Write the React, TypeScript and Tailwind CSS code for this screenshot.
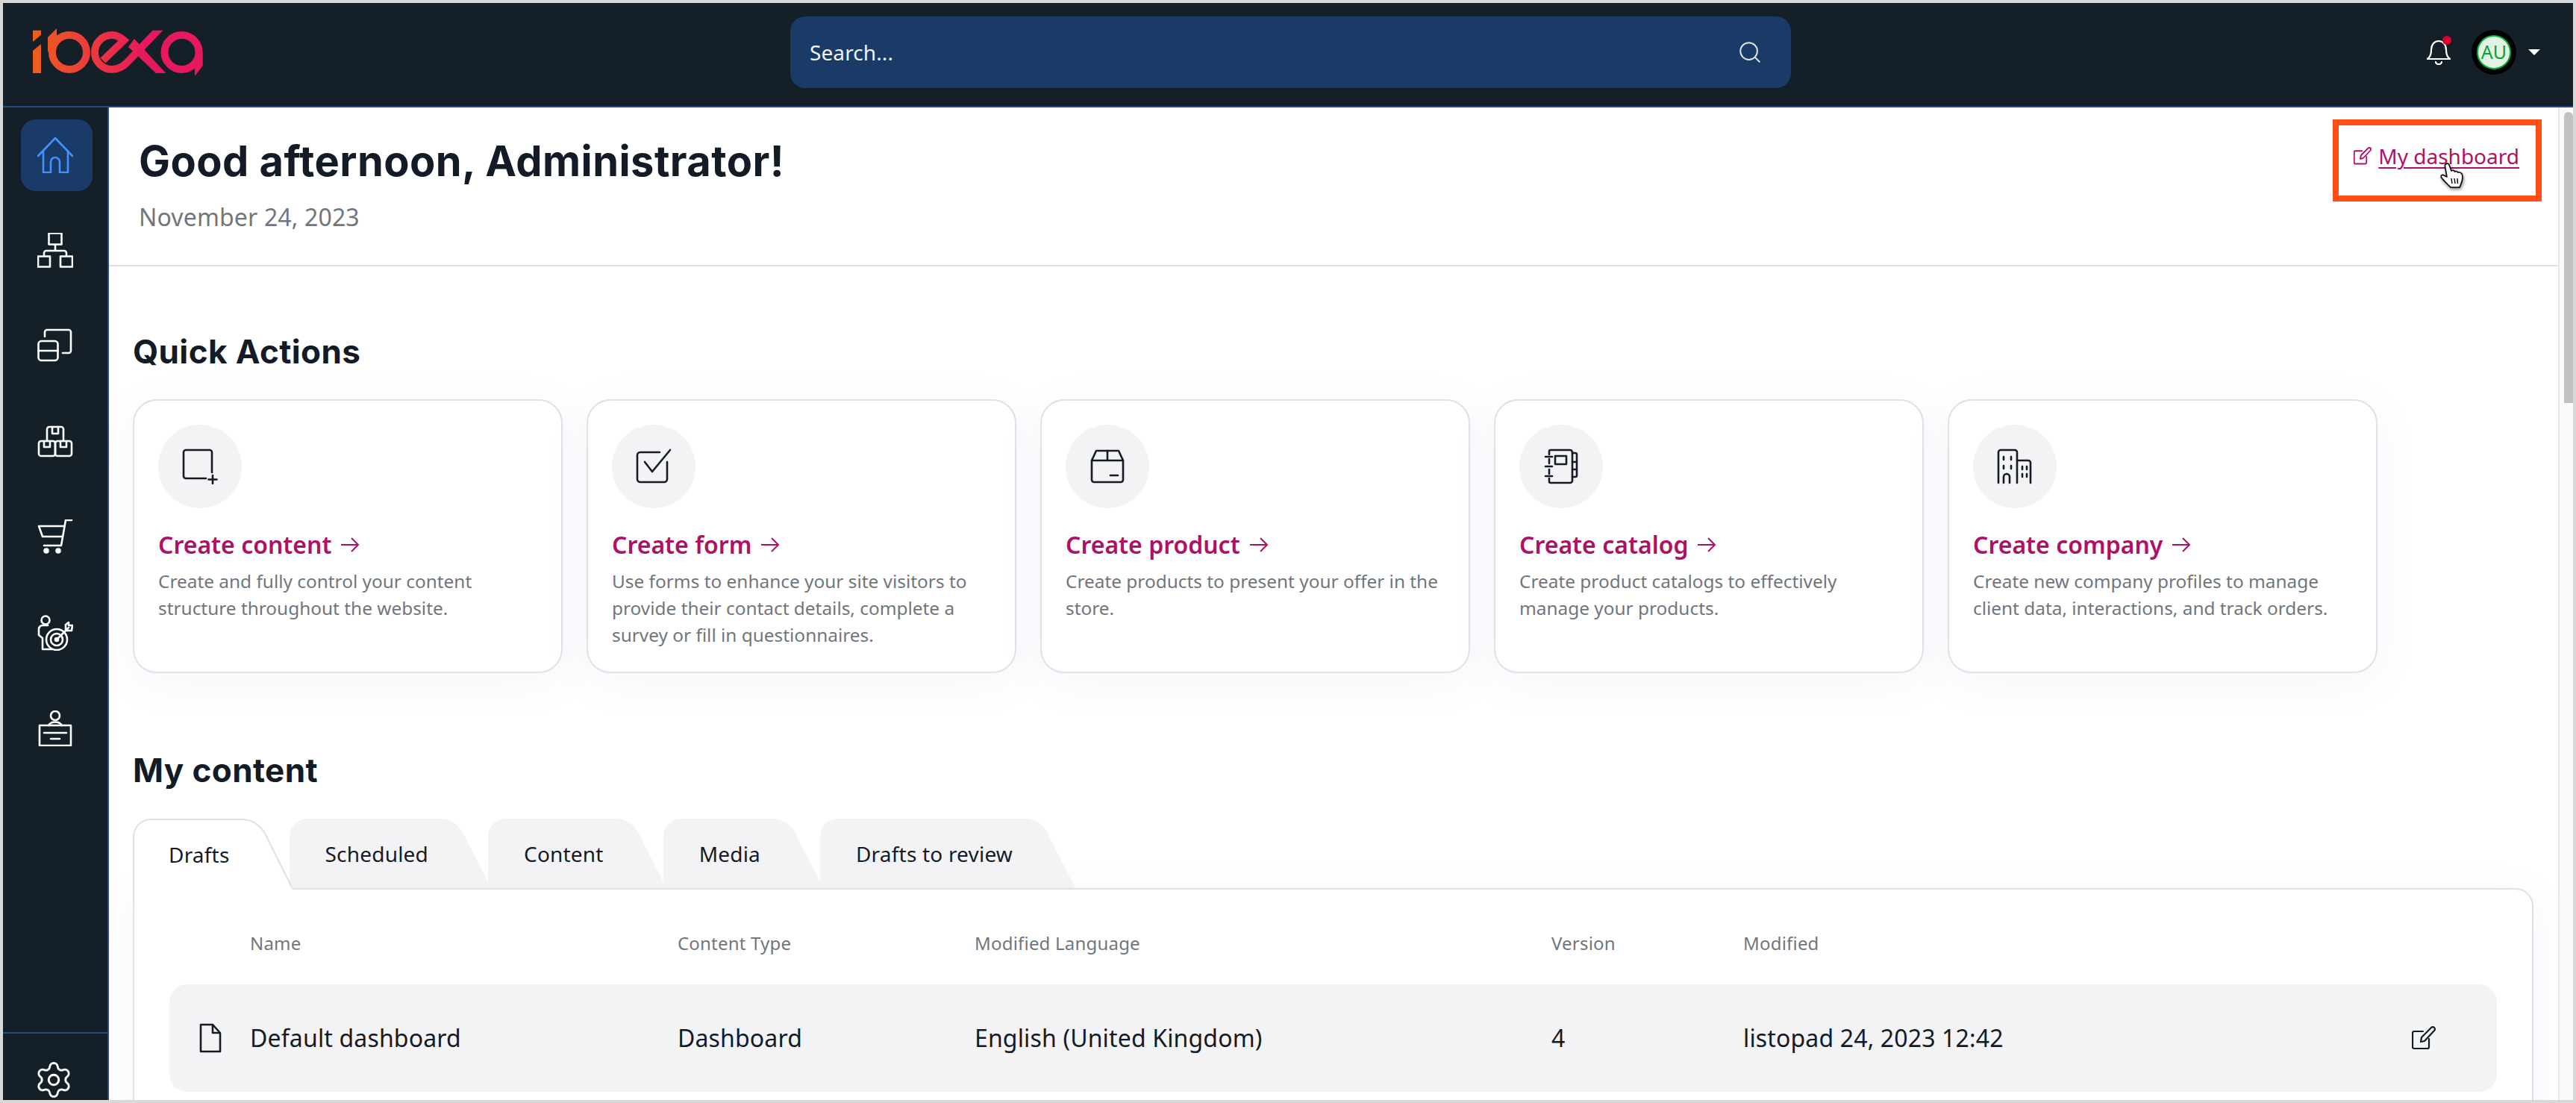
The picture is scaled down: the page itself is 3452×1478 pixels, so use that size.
import { Settings, Search } from "lucide-react"
import type { ReactNode } from "react"

function Logo() {
  return (
    <svg width="228" height="64" viewBox="0 0 228 64" fill="none">
      <defs>
        <linearGradient id="ibexa" gradientUnits="userSpaceOnUse" x1="0" y1="0" x2="150" y2="0">
          <stop offset="0" stopColor="#ee5f1c" />
          <stop offset="1" stopColor="#e8185c" />
        </linearGradient>
        <clipPath id="logoclip">
          <rect x="0" y="2.7" width="228" height="57.3" />
        </clipPath>
      </defs>
      <g fill="url(#ibexa)">
        <polygon points="0,2.7 11,2.7 11,8.7 0,18" />
        <polygon points="0,30 11,21 11,60 0,60" />
        <polygon points="20,32 20,12 32,0 32,14" />
        <polygon points="217.5,40 227.7,32 227.7,50 217,64 217,55" />
        <polygon points="128,25 136,14 178,60 165,60" />
      </g>
      <g stroke="url(#ibexa)" strokeWidth="10" clipPath="url(#logoclip)">
        <circle cx="49" cy="32" r="23" />
        <path d="M94 43 L122 16 C115 10 110 9 106 9 A23 23 0 0 0 106 55 C114 55 120 52 126 46 L172 -2" />
        <circle cx="199.5" cy="32" r="23" />
      </g>
    </svg>
  )
}

function NavButton({ active, children }: { active?: boolean; children: ReactNode }) {
  return (
    <div className={active ? "w-24 h-24 rounded-[20px] bg-[#1a3a68] pr-1 flex items-center justify-center" : "w-24 h-24 pr-1 flex items-center justify-center"}>
      {children}
    </div>
  )
}

function NavIcon({ children, color = "#fff" }: { children: ReactNode; color?: string }) {
  return (
    <svg width="48" height="48" viewBox="0 0 48 48" fill="none" stroke={color} strokeWidth="2.6" strokeLinejoin="round" strokeLinecap="round">
      {children}
    </svg>
  )
}

function EditIcon({ size, color, stroke = 2.2 }: { size: number; color: string; stroke?: number }) {
  return (
    <svg width={size} height={size} viewBox="0 0 32 32" fill="none" stroke={color} strokeWidth={stroke} strokeLinejoin="round" strokeLinecap="round">
      <path d="M15 7 H3 a2 2 0 0 0 -2 2 V28 a2 2 0 0 0 2 2 H21 a2 2 0 0 0 2 -2 V17" />
      <path d="M12 21 L13 15 L26 2 a2.4 2.4 0 0 1 4 4 L17 20 Z" />
    </svg>
  )
}

const actions = [
  {
    title: "Create content",
    text: ["Create and fully control your content", "structure throughout the website."],
    icon: (
      <>
        <path d="M40 32 V5 a3 3 0 0 0 -3 -3 H5 a3 3 0 0 0 -3 3 V37 a3 3 0 0 0 3 3 H32" />
        <path d="M41 36 V47 M35.5 41.5 H46.5" />
      </>
    ),
  },
  {
    title: "Create form",
    text: ["Use forms to enhance your site visitors to", "provide their contact details, complete a", "survey or fill in questionnaires."],
    icon: (
      <>
        <path d="M32 5 H6 a4 4 0 0 0 -4 4 V41 a4 4 0 0 0 4 4 H38 a4 4 0 0 0 4 -4 V18" />
        <path d="M12 18 L22 31 L46 2" />
      </>
    ),
  },
  {
    title: "Create product",
    text: ["Create products to present your offer in the", "store."],
    icon: (
      <>
        <path d="M3 16 L9 3 H39 L45 16 V42 a3 3 0 0 1 -3 3 H6 a3 3 0 0 1 -3 -3 Z" />
        <path d="M3 16 H45 M24 3 V16" />
        <path d="M28 36 H38" />
      </>
    ),
  },
  {
    title: "Create catalog",
    text: ["Create product catalogs to effectively", "manage your products."],
    icon: (
      <>
        <path d="M8 8 V4 a2 2 0 0 1 2 -2 H36 a3 3 0 0 1 3 3 V43 a3 3 0 0 1 -3 3 H10 a2 2 0 0 1 -2 -2 V40" />
        <path d="M8 14 V20 M8 28 V34" />
        <path d="M3 11 H12 M3 24 H12 M3 37 H12" />
        <rect x="16" y="10" width="15" height="11" />
        <path d="M39 6 H43 a2 2 0 0 1 2 2 V36 a2 2 0 0 1 -2 2 H39 M39 18 H45 M39 28 H45" />
      </>
    ),
  },
  {
    title: "Create company",
    text: ["Create new company profiles to manage", "client data, interactions, and track orders."],
    icon: (
      <>
        <path d="M2 46 V5 a3 3 0 0 1 3 -3 H24 a3 3 0 0 1 3 3 V46" />
        <path d="M27 16 H42 a3 3 0 0 1 3 3 V46" />
        <path d="M9 38 a4 4 0 0 1 8 0 V46 M9 38 V46" />
        <path d="M9 11 V15 M19 11 V15 M9 23 V27 M19 23 V27 M34 24 V28 M34 34 V38 M40 24 V28 M40 34 V38" />
      </>
    ),
  },
]

const tabs = ["Drafts", "Scheduled", "Content", "Media", "Drafts to review"]

// same columns for the header and the row
const gridCols = "grid grid-cols-[108px_573px_398px_773px_257px_1fr_114px] items-center"

export default function App() {
  return (
    <div className="relative h-[1478px] w-[3452px] overflow-hidden bg-[#d8d8d8] p-1 font-['Noto_Sans',sans-serif]">
      <div className="flex h-full flex-col bg-white">
        {/* Top bar */}
        <header className="relative flex h-[140px] shrink-0 items-center border-b-2 border-[#264a7c] bg-[#151f28]">
          <div className="ml-10 mt-[-6px]">
            <Logo />
          </div>
          <div className="ml-[787px] mt-[-6px] flex h-24 w-[1341px] items-center justify-between rounded-[20px] bg-[#1a3a68] pl-[26px] pr-[38px] text-[28px] tracking-[0.1px] text-[#f2f4f7]">
            <span>Search...</span>
            <Search size={34} strokeWidth={1.4} className="text-[#dfe3e8]" />
          </div>
          <div className="relative ml-[852px] mt-[-6px]">
            <svg width="32" height="34" viewBox="0 0 32 34" fill="none" stroke="#fff" strokeWidth="2.2" strokeLinecap="round" strokeLinejoin="round">
              <path d="M1 26 C5 23 6 19 6 14 C6 7 10 2 16 2 C22 2 26 7 26 14 C26 19 27 23 31 26 Z" />
              <path d="M12 30 a4 3 0 0 0 8 0" />
            </svg>
            <div className="absolute right-[-1px] top-[-5px] h-3 w-3 rounded-full bg-[#db0032]" />
          </div>
          <div className="ml-7 mt-[-6px] flex h-[60px] w-[60px] items-center justify-center rounded-full bg-black">
            <div className="flex h-[46px] w-[46px] items-center justify-center rounded-full border-2 border-[#0aae3a] bg-[#e2f3e6] text-[25px] text-[#0aa030]">
              AU
            </div>
          </div>
          <div className="ml-4 mt-[-6px] h-0 w-0 border-x-[8px] border-t-[8px] border-x-transparent border-t-white" />
        </header>

        <div className="flex min-h-0 flex-1">
          {/* Side menu */}
          <aside className="flex w-[142px] shrink-0 flex-col border-r-2 border-[#264a7c] bg-[#151f28]">
            <nav className="flex flex-1 flex-col gap-8 pl-6 pt-4">
              <NavButton active>
                <NavIcon color="#4191ff">
                  <path d="M1 25 L24 1 L47 25" />
                  <path d="M8 18 V47 H18 V33 a6 6 0 0 1 12 0 V47 H41 V18" />
                </NavIcon>
              </NavButton>
              <NavButton>
                <NavIcon>
                  <rect x="15.5" y="0.5" width="17" height="15" />
                  <rect x="1" y="31.5" width="16" height="14" />
                  <rect x="31" y="31.5" width="16" height="14" />
                  <path d="M24 16 V23 M9 31 V27 a3 3 0 0 1 3 -3 H36 a3 3 0 0 1 3 3 V31" />
                </NavIcon>
              </NavButton>
              <NavButton>
                <NavIcon>
                  <path d="M10 11 V5 a3 3 0 0 1 3 -3 H42 a3 3 0 0 1 3 3 V30 a3 3 0 0 1 -3 3 H34" />
                  <rect x="1.5" y="17" width="26" height="26" rx="4" />
                  <path d="M1.5 30 H27.5" />
                </NavIcon>
              </NavButton>
              <NavButton>
                <NavIcon>
                  <path d="M13 23 V7 a3 3 0 0 1 3 -3 H32 a3 3 0 0 1 3 3 V23" />
                  <path d="M20 4 V13 H28 V4" />
                  <rect x="2" y="23" width="22" height="20" rx="3" />
                  <rect x="24" y="23" width="22" height="20" rx="3" />
                  <path d="M9 23 V31 H17 V23 M31 23 V31 H39 V23" />
                </NavIcon>
              </NavButton>
              <NavButton>
                <NavIcon>
                  <path d="M46 1 H38 L32 35 H9" />
                  <path d="M2 9 H36 M2 9 L7 23 H34" />
                  <circle cx="12" cy="42" r="2.5" fill="#fff" />
                  <circle cx="28" cy="42" r="2.5" fill="#fff" />
                </NavIcon>
              </NavButton>
              <NavButton>
                <NavIcon>
                  <circle cx="11" cy="7" r="5.5" />
                  <path d="M14 14 H7 a5 5 0 0 0 -5 5 V27 L7 31 V46 H20" />
                  <circle cx="26" cy="33" r="14" />
                  <circle cx="26" cy="33" r="8" />
                  <circle cx="26" cy="33" r="2" />
                  <path d="M26 33 L42 17 M38 13 V21 H46 L47 14 H42 L42 10 Z" />
                </NavIcon>
              </NavButton>
              <NavButton>
                <NavIcon>
                  <circle cx="24" cy="7" r="6" />
                  <path d="M15 20 a10 8 0 0 1 18 0" />
                  <rect x="3" y="20" width="42" height="27" />
                  <path d="M9 30 H39 M18 38 H30" />
                </NavIcon>
              </NavButton>
            </nav>
            <div className="flex h-[91px] shrink-0 justify-center border-t-2 border-[#264a7c] pr-1 pt-[35px]">
              <Settings size={54} strokeWidth={1.3} className="text-white" />
            </div>
          </aside>

          {/* Main column */}
          <main className="min-w-0 flex-1 overflow-hidden">
            <div className="flex h-[213px] justify-between border-b-2 border-[#e0e0e8] pl-10 pr-[52px]">
              <div className="pt-[38px]">
                <h1 className="font-['Inter',sans-serif] text-[56px] leading-[68px] font-bold tracking-[0.45px] text-[#131c26]">
                  Good afternoon, Administrator!
                </h1>
                <p className="mt-[19px] text-[32px] leading-[44px] tracking-[0.15px] text-[#71767c]">November 24, 2023</p>
              </div>
              <a className="mt-[45px] flex h-10 items-center gap-[9px] text-[28px] text-[#ae1164] underline underline-offset-[4px] decoration-2">
                <EditIcon size={24} color="#ae1164" stroke={2.4} />
                My dashboard
              </a>
            </div>

            <section className="pl-8 pt-[84px]">
              <h2 className="h-[60px] font-['Inter',sans-serif] text-[44px] leading-[60px] font-bold tracking-[0.4px] text-[#131c26]">Quick Actions</h2>
              <div className="mt-[34px] flex gap-8">
                {actions.map((a) => (
                  <div
                    key={a.title}
                    className="h-[367px] w-[576px] rounded-[32px] border-2 border-[#e0e0e8] bg-white p-8 shadow-[0_12px_64px_rgba(71,88,154,0.06)]"
                  >
                    <div className="flex h-28 w-28 items-center justify-center rounded-full bg-[#f3f3f5]">
                      <svg width="48" height="48" viewBox="0 0 48 48" fill="none" stroke="#131c26" strokeWidth="2.6" strokeLinecap="round" strokeLinejoin="round">
                        {a.icon}
                      </svg>
                    </div>
                    <div className="mt-[25px] flex h-12 items-center gap-3 text-[32px] font-semibold text-[#ae1164]">
                      {a.title}
                      <svg width="26" height="24" viewBox="0 0 26 24" fill="none" stroke="#ae1164" strokeWidth="2">
                        <path d="M1 12 H24 M15 3 L24 12 L15 21" />
                      </svg>
                    </div>
                    <p className="mt-[7px] text-[24.4px] leading-9 text-[#71767c]">
                      {a.text.map((line) => (
                        <span key={line} className="block whitespace-nowrap">
                          {line}
                        </span>
                      ))}
                    </p>
                  </div>
                ))}
              </div>
            </section>

            <section className="pl-8 pr-[33px] pt-[100px]">
              <h2 className="h-[60px] font-['Inter',sans-serif] text-[44px] leading-[60px] font-bold tracking-[0.4px] text-[#131c26]">My content</h2>
              <div className="relative z-10 mt-[35px] mb-[-2px] flex h-[95px] items-stretch">
                {tabs.map((t, i) => (
                  <div key={t} className={i === 0 ? "relative z-10 flex" : "flex"}>
                    <div
                      className={
                        i === 0
                          ? "flex items-center rounded-tl-[24px] border-l-2 border-t-2 border-[#e0e0e8] bg-white pb-[2px] pl-[46px] pr-2 text-[28px] tracking-[0.2px] text-[#131c26]"
                          : "flex items-center rounded-tl-[24px] bg-[#f3f3f5] pl-12 pr-2 text-[28px] tracking-[0.2px] text-[#131c26] mb-[2px]"
                      }
                    >
                      {t}
                    </div>
                    <svg width="72" height="95" viewBox="0 0 72 95" className="shrink-0 overflow-visible">
                      {i === 0 ? (
                        <>
                          <path d="M0 0 H8 C24 0 36 10 44 30 L76 95 H0 Z" fill="#fff" />
                          <path d="M0 1 H8 C24 1 36 10 44 30 L76 94" fill="none" stroke="#e0e0e8" strokeWidth="2" />
                        </>
                      ) : (
                        <path d="M0 0 H8 C24 0 36 10 44 30 L76 93 H0 Z" fill="#f3f3f5" />
                      )}
                    </svg>
                  </div>
                ))}
              </div>
              <div className="h-[400px] rounded-tr-[24px] border-2 border-[#e0e0e8] bg-white px-[47px] pt-[48px] shadow-[0_12px_64px_rgba(71,88,154,0.06)]">
                <div className={`${gridCols} h-12 text-[24px] tracking-[0.2px] text-[#71767c]`}>
                  <span />
                  <span>Name</span>
                  <span>Content Type</span>
                  <span>Modified Language</span>
                  <span>Version</span>
                  <span>Modified</span>
                  <span />
                </div>
                <div className={`${gridCols} mt-[31px] h-36 rounded-[24px] bg-[#f3f3f5] text-[32px] tracking-[0.15px] text-[#131c26]`}>
                  <span className="pl-10">
                    <svg width="30" height="40" viewBox="0 0 30 40" fill="none" stroke="#131c26" strokeWidth="2.6" strokeLinejoin="round">
                      <path d="M2 2 H18 L28 13 V38 H2 Z" />
                      <path d="M18 2 V13 H28" />
                    </svg>
                  </span>
                  <span>Default dashboard</span>
                  <span>Dashboard</span>
                  <span>English (United Kingdom)</span>
                  <span>4</span>
                  <span>listopad 24, 2023 12:42</span>
                  <span className="flex">
                    <EditIcon size={32} color="#131c26" />
                  </span>
                </div>
              </div>
            </section>
          </main>

          {/* Scrollbar */}
          <div className="w-5 shrink-0 border-l-2 border-[#e8e8ec] bg-[#fafafa] pl-[6px] pt-[6px]">
            <div className="h-[390px] w-3 rounded-t-[8px] bg-[#c1c1c1]" />
          </div>
        </div>
      </div>

      {/* Annotation over the screenshot */}
      <div className="absolute left-[3126px] top-[160px] h-[110px] w-[280px] border-[8px] border-[#ff4f17]" />
      <svg className="absolute left-[3270px] top-[218px] drop-shadow-[1px_2px_2px_rgba(0,0,0,0.5)]" width="32" height="36" viewBox="0 0 32 36" stroke="#000" strokeWidth="1.6" strokeLinejoin="round" fill="#fff">
        <path d="M8 1.5 C10 0.5 11.5 1.5 12 3 L15 11 C17 9.5 19 10.5 19.5 12 C21 11 23 11.5 23.5 13 C25.5 12.5 28 13.5 29 15 C30.5 18 30 24 28 28 L26 33 H14 L9 28 C6 25 3 22 1.5 19.5 C0.5 18 2 16 4 16.5 L9 19 L6.5 5 C6.2 3.5 7 2 8 1.5 Z" />
        <path d="M15 21 L16 28 M19 21 L20 28 M23 21 L23.5 28" fill="none" strokeWidth="1.4" />
      </svg>
    </div>
  )
}
